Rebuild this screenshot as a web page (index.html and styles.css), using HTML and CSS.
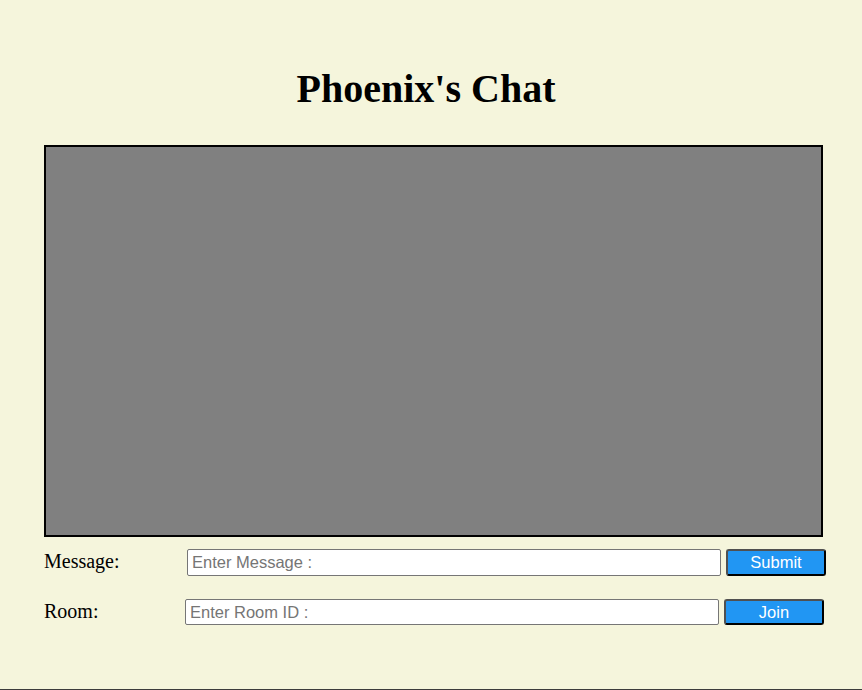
FILE: index.html
```html
<!DOCTYPE html>
<html>
<head>
<meta charset="utf-8">
<title>Phoenix's Chat</title>
<link rel="stylesheet" href="styles.css">
</head>
<body>
<div class="page">
  <h1 class="title">Phoenix's Chat</h1>
  <div class="chat-box"></div>
  <div class="row row-message">
    <label class="label label-message">Message:</label>
    <input class="field" type="text" placeholder="Enter Message :">
    <button class="btn">Submit</button>
  </div>
  <div class="row row-room">
    <label class="label label-room">Room:</label>
    <input class="field" type="text" placeholder="Enter Room ID :">
    <button class="btn">Join</button>
  </div>
</div>
</body>
</html>
```

FILE: styles.css
```css
* { box-sizing: border-box; }
html, body { margin: 0; padding: 0; }
body {
  background: #f5f5dc;
  font-family: "Liberation Serif", "Times New Roman", serif;
  height: 690px;
  border-bottom: 1px solid #3c3c3c;
  overflow: hidden;
}
.page {
  padding-left: 44px;
  padding-top: 66px;
}
.title {
  margin: 0;
  font-size: 40px;
  line-height: 46px;
  font-weight: bold;
  text-align: center;
  width: 764px;
  color: #000;
}
.chat-box {
  margin-top: 33px;
  width: 779px;
  height: 392px;
  background: #808080;
  border: 2px solid #000;
}
.row {
  display: flex;
  align-items: baseline;
}
.row-message { margin-top: 12px; }
.row-room { margin-top: 23px; }
.label {
  font-size: 20px;
  color: #000;
}
.label-message { width: 143px; }
.label-room { width: 141px; }
.field {
  width: 534px;
  height: 27px;
  margin: 0;
  padding: 0 4px;
  border: 1px solid #767676;
  border-radius: 2px;
  background: #fff;
  font-family: "Liberation Sans", Arial, sans-serif;
  font-size: 16.5px;
  color: #000;
}
.row-room .field { height: 26px; }
.field::placeholder { color: #757575; }
.btn {
  margin-left: 5px;
  width: 100px;
  height: 27px;
  padding: 0;
  background: #2196f3;
  color: #fff;
  border: 2px solid;
  border-color: #505050 #000 #000 #505050;
  border-radius: 3px;
  font-family: "Liberation Sans", Arial, sans-serif;
  font-size: 16.5px;
}
.row-room .btn { height: 26px; }
```
